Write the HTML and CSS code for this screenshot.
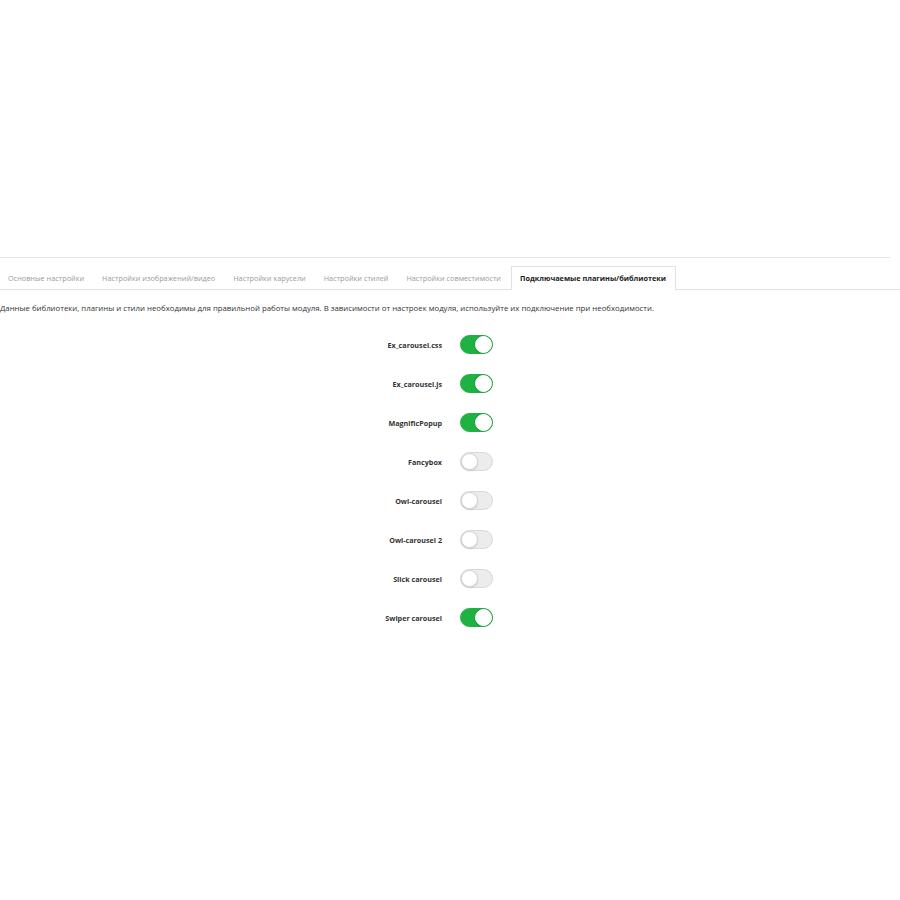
FILE: index.html
```html
<!DOCTYPE html>
<html lang="ru">
<head>
<meta charset="utf-8">
<title>Подключаемые плагины/библиотеки</title>
<link rel="stylesheet" href="styles.css">
</head>
<body>
<div class="page">
  <div class="panel">
    <ul class="tabs">
      <li class="tab">Основные настройки</li>
      <li class="tab">Настройки изображений/видео</li>
      <li class="tab">Настройки карусели</li>
      <li class="tab">Настройки стилей</li>
      <li class="tab">Настройки совместимости</li>
      <li class="tab active">Подключаемые плагины/библиотеки</li>
    </ul>
    <p class="note">Данные библиотеки, плагины и стили необходимы для правильной работы модуля. В зависимости от настроек модуля, используйте их подключение при необходимости.</p>
    <div class="form">
      <div class="row"><span class="label">Ex_carousel.css</span><span class="switch on"><span class="knob"></span></span></div>
      <div class="row"><span class="label">Ex_carousel.js</span><span class="switch on"><span class="knob"></span></span></div>
      <div class="row"><span class="label">MagnificPopup</span><span class="switch on"><span class="knob"></span></span></div>
      <div class="row"><span class="label">Fancybox</span><span class="switch"><span class="knob"></span></span></div>
      <div class="row"><span class="label">Owl-carousel</span><span class="switch"><span class="knob"></span></span></div>
      <div class="row"><span class="label">Owl-carousel 2</span><span class="switch"><span class="knob"></span></span></div>
      <div class="row"><span class="label">Slick carousel</span><span class="switch"><span class="knob"></span></span></div>
      <div class="row"><span class="label">Swiper carousel</span><span class="switch on"><span class="knob"></span></span></div>
    </div>
  </div>
</div>
</body>
</html>
```
FILE: styles.css
```css
html, body {
  margin: 0;
  padding: 0;
  background: #fff;
}

body {
  font-family: "Open Sans", "Liberation Sans", sans-serif;
  font-size: 8px;
  color: #333;
}

.page {
  padding-top: 257px;
}

.panel {
  border-top: 1px solid #e6e6e6;
  width: 890px;
}

.tabs {
  list-style: none;
  margin: 8px 0 0 -1px;
  padding: 0;
  display: flex;
  border-bottom: 1px solid #e2e2e2;
  width: 901px;
  font-size: 7.3px;
}

.tab {
  padding: 0 8px;
  height: 22px;
  line-height: 22px;
  color: #9a9a9a;
  white-space: nowrap;
  margin-bottom: -1px;
  border: 1px solid transparent;
  border-bottom: none;
}

.tab.active {
  margin-left: 1px;
  padding: 0 9px 0 8px;
  border-color: #e2e2e2;
  background: #fff;
  color: #222;
  font-weight: 700;
  font-size: 7.3px;
  height: 23px;
}

.note {
  margin: 12px 0 0;
  line-height: 12px;
  font-size: 7.8px;
  color: #333;
  white-space: nowrap;
}

.form {
  margin-top: 21px;
  display: flex;
  flex-direction: column;
  gap: 20px;
}

.row {
  display: grid;
  grid-template-columns: 442px 33px;
  column-gap: 18px;
  align-items: center;
  height: 19px;
}

.label {
  text-align: right;
  font-weight: 700;
  font-size: 7.2px;
  color: #333;
}

.switch {
  position: relative;
  width: 33px;
  height: 19px;
  box-sizing: border-box;
  border-radius: 10px;
  background: #ececec;
  border: 1px solid #d9d9d9;
}

.switch.on {
  background: #1fb141;
  border-color: #1fb141;
}

.knob {
  position: absolute;
  top: 0;
  left: 0;
  width: 17px;
  height: 17px;
  box-sizing: border-box;
  border-radius: 50%;
  background: #fff;
  border: 1px solid #d4d4d4;
  box-shadow: 0 1px 2px rgba(0, 0, 0, 0.12);
}

.switch.on .knob {
  left: 14px;
  border-color: #fff;
  box-shadow: 0 0 0 1px rgba(0, 0, 0, 0.08);
}
```
